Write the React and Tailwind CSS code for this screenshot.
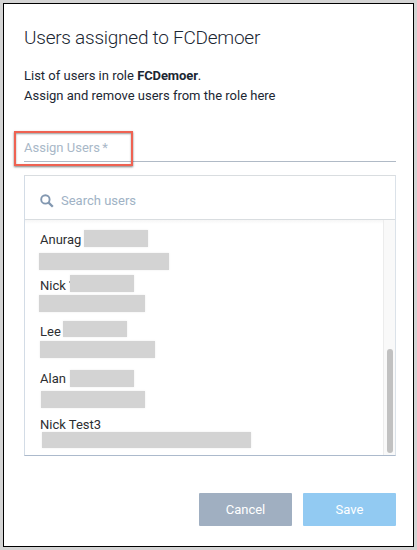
const users = [
  {
    name: 'Anurag',
    slot: 'w-11 pt-0.5',
    mask: 'mt-0.5 h-[17px] w-16',
    detail: 'mt-[25px] -ml-px h-[17px] w-[130px]',
  },
  {
    name: 'Nick',
    slot: 'w-[30px] pt-0.5',
    mask: 'mt-px h-[17px] w-16',
    detail: 'mt-[21px] -ml-px h-[17px] w-[106px]',
    tick: true,
  },
  {
    name: 'Lee',
    slot: 'w-[23px] pt-0.5',
    mask: 'mt-px h-4 w-16',
    detail: 'mt-[21px] h-[17px] w-[115px]',
  },
  {
    name: 'Alan',
    slot: 'w-[30px] pt-[3px]',
    mask: 'mt-1 h-[17px] w-16',
    detail: 'mt-[25px] ml-px h-[17px] w-[104px]',
  },
  {
    name: 'Nick Test3',
    slot: 'w-20 pt-[3px]',
    mask: '',
    detail: 'mt-5 ml-0.5 h-4 w-[209px]',
  },
];

function UserRow({ user }) {
  return (
    <li className="grid h-[46px] shrink-0 items-start">
      <div className="col-start-1 row-start-1 flex items-start">
        <span className={`${user.slot} flex whitespace-nowrap text-[13px] leading-5 text-[#2c2e31]`}>
          {user.name}
          {user.tick && <span className="mt-[5px] ml-auto h-0.5 w-px bg-[#8a8a8a]" />}
        </span>
        {user.mask && <span className={`${user.mask} bg-[#d3d3d3] shadow-[0_0_2px_#ececec]`} />}
      </div>
      <div className={`${user.detail} col-start-1 row-start-1 bg-[#d3d3d3] shadow-[0_0_2px_#ececec]`} />
    </li>
  );
}

function SearchIcon() {
  return (
    <svg width="14" height="14" viewBox="0 0 14 14" fill="none" stroke="#8297b0" aria-hidden="true">
      <circle cx="5.4" cy="5.4" r="4.2" strokeWidth="1.9" />
      <path d="M8.6 8.6 L12.8 12.8" strokeWidth="2.3" />
    </svg>
  );
}

export default function App() {
  return (
    <div className="h-[550px] w-[417px] overflow-hidden bg-[#d4d4d4] p-[3px] font-['Roboto',sans-serif]">
      <main className="flex h-[544px] w-[411px] flex-col border border-black bg-white pt-5 pr-[17px] pl-5">
        <h1 className="h-7 text-[19px] leading-7 font-light tracking-[-0.25px] whitespace-nowrap text-[#1c2733]">
          Users assigned to FCDemoer
        </h1>
        <div className="mt-[14px] h-[39px] text-[13px] leading-[19px] whitespace-nowrap text-[#1c2733]">
          <p>
            List of users in role <b className="font-bold tracking-[-0.1px]">FCDemoer</b>.
          </p>
          <p className="mt-px">Assign and remove users from the role here</p>
        </div>

        <div className="relative mt-[32px] h-[25px] border-b border-[#b0bac6] pt-px text-[13px] leading-5 text-[#a9b8c8]">
          Assign Users <span className="-ml-px">*</span>
          <div className="absolute -top-[6px] -left-[10px] h-[35px] w-[119px] border-2 border-[#ef6252] shadow-[0_1px_2px_rgba(0,0,0,0.5),inset_0_1px_2px_rgba(0,0,0,0.4)]" />
        </div>

        <section className="mt-[13px] flex h-[281px] w-[372px] shrink-0 flex-col border border-t-[#d9dde0] border-r-[#dbe2e9] border-b-[#acbacc] border-l-[#d3dce6]">
          <div className="flex h-11 shrink-0 items-center gap-[7px] border-b border-[#d9dde0] pt-1.5 pl-[15px] text-[13px] text-[#a0b2c5]">
            <SearchIcon />
            <span>Search users</span>
          </div>
          <div className="flex min-h-0 flex-1 justify-between">
            <ul className="flex flex-1 flex-col bg-linear-to-b from-[#f6f6f6] from-0% to-white to-[4px] pt-2 pl-[15px]">
              {users.map((user) => (
                <UserRow key={user.name} user={user} />
              ))}
            </ul>
            <div className="flex w-3 shrink-0 flex-col items-center justify-end border-l border-[#ececec] bg-[#f9f9f9] pb-0.5">
              <div className="h-[104px] w-[6px] rounded-full bg-[#c1c1c1]" />
            </div>
          </div>
        </section>

        <footer className="mt-[37px] flex justify-end gap-[11px] text-[13px] text-white">
          <button className="h-[33px] w-[93px] rounded-[1px] bg-[#a0afc1]">Cancel</button>
          <button className="h-[33px] w-[93px] rounded-[1px] bg-[#92caf2]">Save</button>
        </footer>
      </main>
    </div>
  );
}
